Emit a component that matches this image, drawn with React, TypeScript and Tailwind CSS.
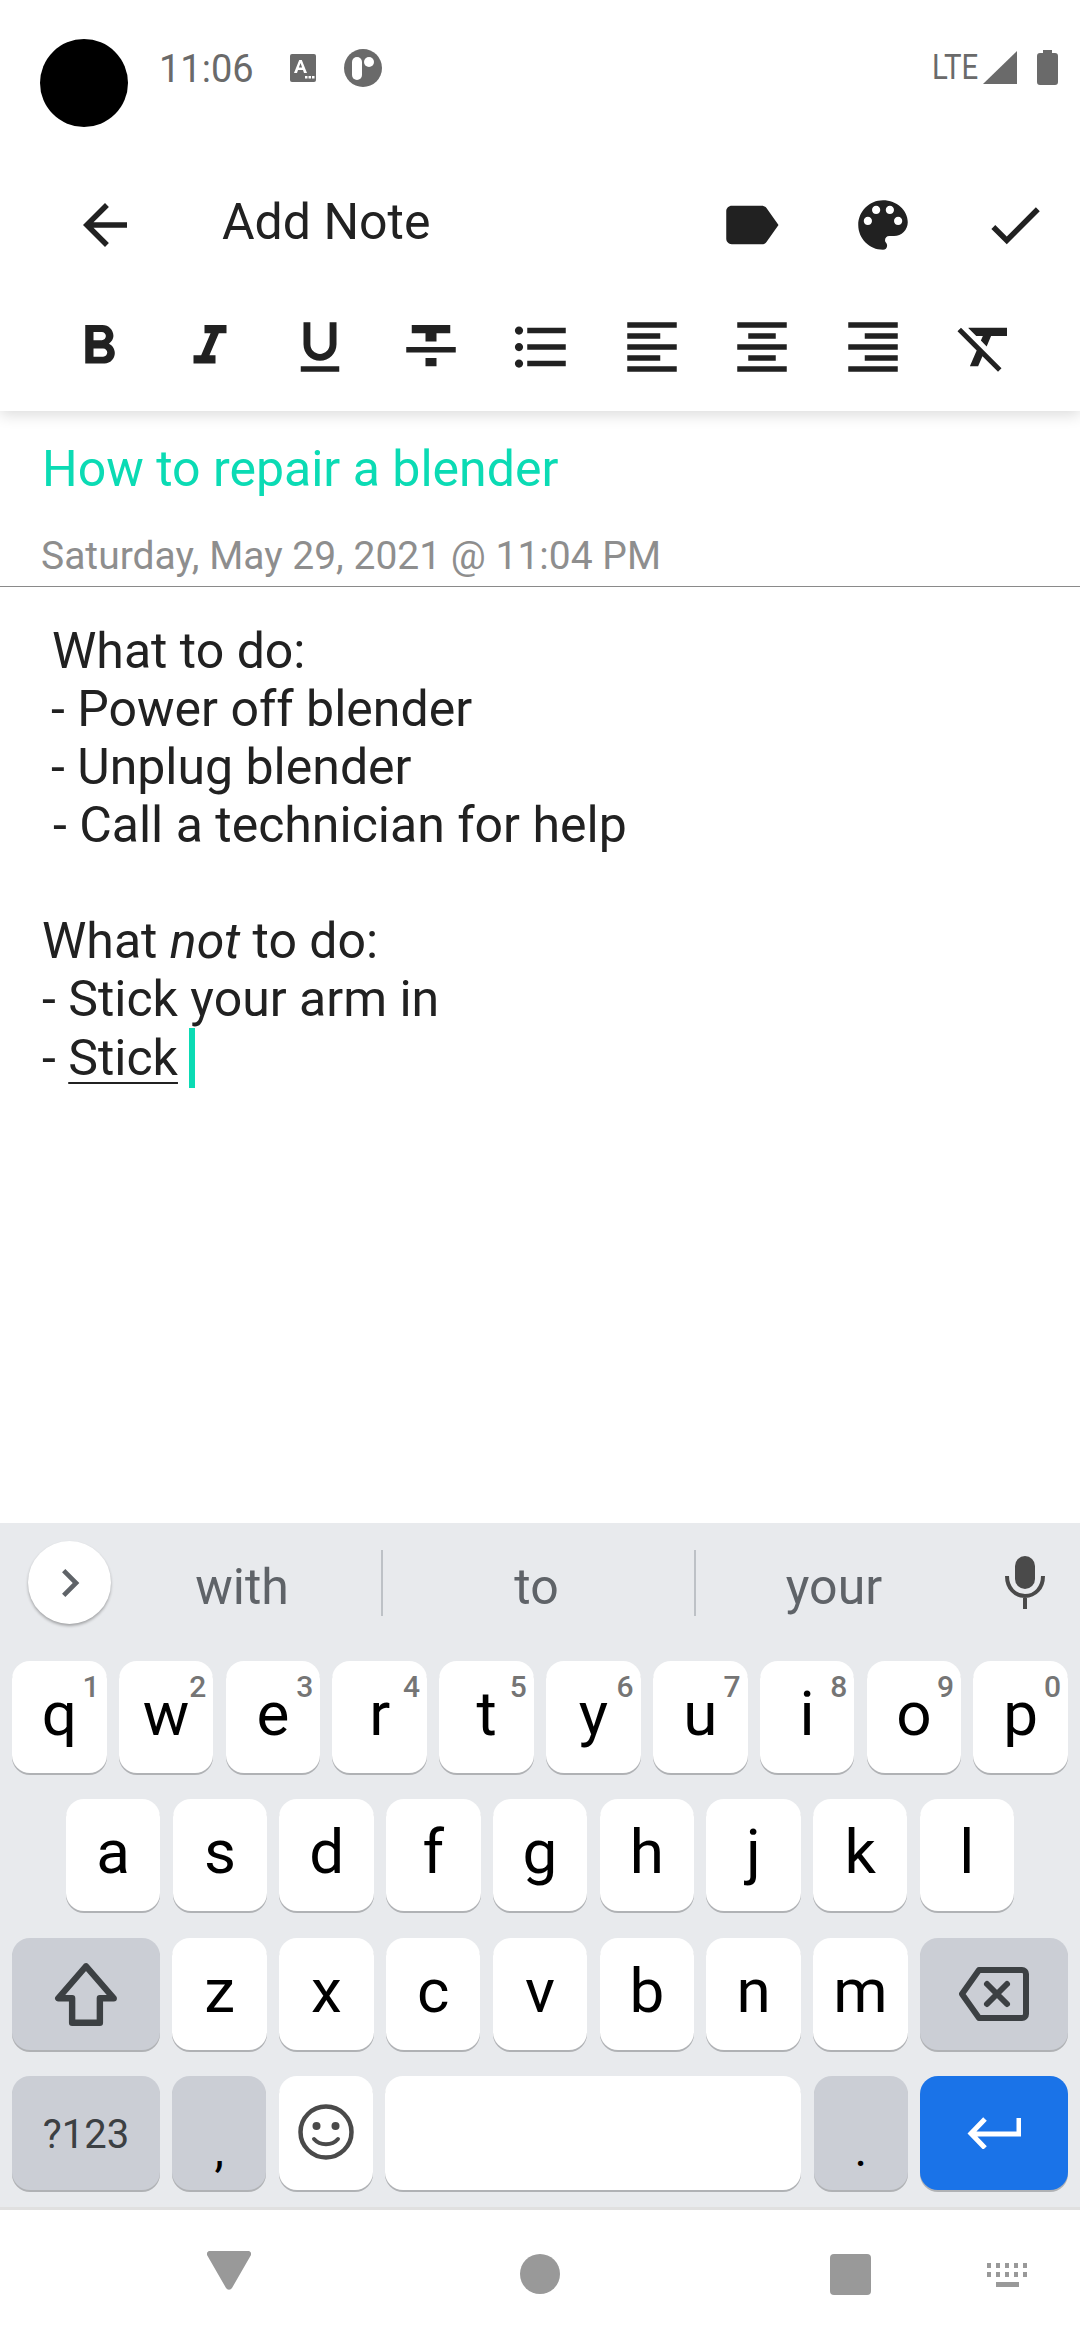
// App.tsx
import React from 'react';

const Icon = ({ d, size = 66, className = '' }: { d: string; size?: number; className?: string }) => (
  <svg viewBox="0 0 24 24" width={size} height={size} className={`shrink-0 ${className}`} fill="currentColor">
    <path d={d} />
  </svg>
);

const formatIcons = [
  'M15.6 10.79c.97-.67 1.65-1.77 1.65-2.79 0-2.26-1.75-4-4-4H7v14h7.04c2.09 0 3.71-1.7 3.71-3.79 0-1.52-.86-2.82-2.15-3.42zM10 6.5h3c.83 0 1.5.67 1.5 1.5s-.67 1.5-1.5 1.5h-3v-3zm3.5 9H10v-3h3.5c.83 0 1.5.67 1.5 1.5s-.67 1.5-1.5 1.5z',
  'M10 4v3h2.21l-3.42 8H6v3h8v-3h-2.21l3.42-8H18V4z',
  'M12 17c3.31 0 6-2.69 6-6V3h-2.5v8c0 1.93-1.57 3.5-3.5 3.5S8.5 12.93 8.5 11V3H6v8c0 3.31 2.69 6 6 6zm-7 2v2h14v-2H5z',
  'M10 19h4v-3h-4v3zM5 4v3h5v3h4V7h5V4H5zM3 14h18v-2H3v2z',
  'M4 10.5c-.83 0-1.5.67-1.5 1.5s.67 1.5 1.5 1.5 1.5-.67 1.5-1.5-.67-1.5-1.5-1.5zm0-6c-.83 0-1.5.67-1.5 1.5S3.17 7.5 4 7.5 5.5 6.83 5.5 6 4.83 4.5 4 4.5zm0 12c-.83 0-1.5.68-1.5 1.5s.68 1.5 1.5 1.5 1.5-.68 1.5-1.5-.67-1.5-1.5-1.5zM7 19h14v-2H7v2zm0-6h14v-2H7v2zm0-8v2h14V5H7z',
  'M15 15H3v2h12v-2zm0-8H3v2h12V7zM3 13h18v-2H3v2zm0 8h18v-2H3v2zM3 3v2h18V3H3z',
  'M7 15v2h10v-2H7zm-4 6h18v-2H3v2zm0-8h18v-2H3v2zm4-6v2h10V7H7zM3 3v2h18V3H3z',
  'M3 21h18v-2H3v2zm6-4h12v-2H9v2zm-6-4h18v-2H3v2zm6-4h12V7H9v2zM3 3v2h18V3H3z',
  'M3.27 5L2 6.27l6.97 6.97L6.5 19h3l1.57-3.66L16.73 21 18 19.73 3.55 5.27 3.27 5zM6 5v.18L8.82 8h2.4l-.72 1.68 2.1 2.1L14.21 8H20V5H6z',
];

const StatusBar = () => (
  <div className="flex h-[127px] items-start pl-[40px] text-[#6a6a6a]">
    <div className="mt-[39px] size-[88px] shrink-0 rounded-full bg-black" />
    <span className="ml-[31px] mt-[47px] text-[38px] leading-[44px]">11:06</span>
    <svg viewBox="0 0 26 28" width={26} height={28} className="ml-[36px] mt-[54px] shrink-0">
      <rect width="26" height="28" rx="2" fill="#6a6a6a" />
      <path d="M4 19L9.2 6h2.6L17 19h-3l-1-3H8l-1 3zM8.9 13.6h3.2L10.5 9z" fill="#fff" />
      <path d="M15 22h2.5v2.5H15zM18.5 22H21v2.5h-2.5zM22 22h2.500v2.500H22z" fill="#fff" />
    </svg>
    <svg viewBox="0 0 38 38" width={38} height={38} className="ml-[28px] mt-[49px] shrink-0">
      <circle cx="19" cy="19" r="19" fill="#6a6a6a" />
      <rect x="8" y="8" width="10" height="23" rx="5" fill="#fff" />
      <circle cx="25" cy="13" r="5" fill="#fff" />
    </svg>
    <span className="ml-auto mt-[48px] w-[44px] origin-left scale-x-[0.84] text-[35px] leading-[40px]">LTE</span>
    <svg viewBox="0 0 34 33" width={34} height={33} className="ml-[7px] mt-[51px] shrink-0">
      <path d="M34 0v33H0z" fill="#6a6a6a" />
    </svg>
    <svg viewBox="0 0 21 35" width={21} height={35} className="ml-[20px] mr-[22px] mt-[50px] shrink-0">
      <path d="M6 0h9v3h3a3 3 0 0 1 3 3v26a3 3 0 0 1-3 3H3a3 3 0 0 1-3-3V6a3 3 0 0 1 3-3h3z" fill="#6a6a6a" />
    </svg>
  </div>
);

const Toolbar = () => (
  <div className="text-[#212121]">
    <div className="flex h-[156px] items-center pl-[72px] pr-[32px] pt-[40px]">
      <Icon d="M20 11H7.830l5.590-5.590L12 4l-8 8 8 8 1.410-1.410L7.830 13H20v-2z" />
      <span className="ml-[84px] -mt-[6px] text-[50px] leading-[56px]">Add Note</span>
      <Icon className="ml-auto" d="M17.630 5.840C17.270 5.330 16.670 5 16 5L5 5.010C3.900 5.010 3 5.900 3 7v10c0 1.100.9 1.990 2 1.990L16 19c.67 0 1.270-.33 1.630-.84L22 12l-4.370-6.160z" />
      <Icon className="ml-[66px]" d="M12 3c-4.970 0-9 4.030-9 9s4.030 9 9 9c.83 0 1.500-.67 1.500-1.500 0-.39-.15-.74-.39-1.010-.23-.26-.38-.61-.38-.99 0-.83.67-1.500 1.500-1.500H16c2.760 0 5-2.240 5-5 0-4.420-4.030-8-9-8zm-5.500 9c-.83 0-1.500-.67-1.500-1.500S5.670 9 6.500 9 8 9.670 8 10.500 7.330 12 6.500 12zm3-4C8.670 8 8 7.330 8 6.500S8.670 5 9.500 5s1.500.67 1.500 1.500S10.330 8 9.500 8zm5 0c-.83 0-1.500-.67-1.500-1.500S13.670 5 14.500 5s1.500.67 1.500 1.500S15.330 8 14.500 8zm3 4c-.83 0-1.500-.67-1.500-1.500S16.670 9 17.500 9s1.500.67 1.500 1.500-.67 1.500-1.500 1.500z" />
      <Icon className="ml-[66px]" d="M9 16.170L4.830 12l-1.420 1.410L9 19 21 7l-1.410-1.410z" />
    </div>
    <div className="flex h-[128px] items-start pl-[44px] pt-[31px]">
      {formatIcons.map((d, i) => (
        <div key={i} className={`flex w-[110.5px] justify-center ${i === 8 ? 'pl-[3px]' : ''}`}>
          <Icon d={d} />
        </div>
      ))}
    </div>
  </div>
);

const NoteBody = () => (
  <div className="h-[1112px] bg-white text-[#212121]">
    <div className="px-[42px] pt-[29px] text-[50px] leading-[58px] text-[#0bdbb4]">How to repair a blender</div>
    <div className="px-[41px] pt-[36px] text-[39px] leading-[44px] text-[#8e8e8e]">Saturday, May 29, 2021 @ 11:04 PM</div>
    <div className="mt-[8px] h-px bg-[#8a8a8a]" />
    <div className="px-[42px] pt-[35px] text-[50px] leading-[58px]">
      <div className="pl-[10px]">What to do:</div>
      <div className="pl-[9px]">- Power off blender</div>
      <div className="pl-[9px]">- Unplug blender</div>
      <div className="pl-[11px]">- Call a technician for help</div>
      <div className="h-[58px]" />
      <div>What <em>not</em> to do:</div>
      <div>- Stick your arm in</div>
      <div className="flex items-center whitespace-pre">
        - <span className="underline decoration-[2px] underline-offset-[7px]">Stick</span>
        <span className="ml-[11px] h-[60px] w-[6px] bg-[#0bdbb4]" />
      </div>
    </div>
  </div>
);

const Key = ({ label, hint }: { label: string; hint?: string }) => (
  <div className="relative flex h-[112px] flex-1 items-start justify-center rounded-[18px] bg-white text-[62px] leading-[70px] text-black shadow-[0_2px_0_#b0b2b5]">
    <span className="pt-[18px]">{label}</span>
    {hint && <span className="absolute right-[7px] top-[9px] text-[30px] font-medium leading-[34px] text-[#757575]">{hint}</span>}
  </div>
);

const Keyboard = () => (
  <div className="h-[687px] border-b-[3px] border-[#e0e0e0] bg-[#e8eaed]">
    <div className="flex h-[138px] items-start">
      <div className="ml-[28px] mt-[18px] flex size-[83px] shrink-0 items-center justify-center rounded-full bg-white text-[#5f6368] shadow-[0_2px_3px_rgba(0,0,0,0.3)]">
        <Icon size={56} d="M10 6L8.590 7.410 13.170 12l-4.580 4.590L10 18l6-6z" />
      </div>
      <div className="mt-[27px] flex h-[66px] w-[272px] items-center justify-center border-r-2 border-[#bdc1c6] text-[50px] text-[#5f6368]">
        <span className="-ml-[8px] pt-[8px]">with</span>
      </div>
      <div className="mt-[27px] flex h-[66px] w-[313px] items-center justify-center border-r-2 border-[#bdc1c6] text-[50px] text-[#5f6368]">
        <span className="-ml-[4px] pt-[8px]">to</span>
      </div>
      <div className="mt-[27px] flex h-[66px] w-[276px] items-center justify-center text-[50px] text-[#5f6368]">
        <span className="pt-[8px]">your</span>
      </div>
      <svg viewBox="0 0 40 53" width={40} height={53} className="ml-[33px] mt-[33px] shrink-0 text-[#4a4a4a]" fill="none" stroke="currentColor" strokeWidth={4}>
        <rect x="10" y="0" width="20" height="33" rx="10" fill="currentColor" stroke="none" />
        <path d="M2 20c0 12 8 20 18 20s18-8 18-20M20 40v13" />
      </svg>
    </div>
    <div className="flex gap-[12.300px] px-[12px]">
      {['q', 'w', 'e', 'r', 't', 'y', 'u', 'i', 'o', 'p'].map((k, i) => (
        <Key key={k} label={k} hint={String((i + 1) % 10)} />
      ))}
    </div>
    <div className="mt-[26px] flex gap-[12.300px] px-[66px]">
      {['a', 's', 'd', 'f', 'g', 'h', 'j', 'k', 'l'].map((k) => (
        <Key key={k} label={k} />
      ))}
    </div>
    <div className="mt-[27px] flex gap-[12.300px] px-[12px]">
      <div className="flex h-[112px] w-[148px] items-center justify-center rounded-[18px] bg-[#cbced5] text-[#3c4043] shadow-[0_2px_0_#b0b2b5]">
        <svg viewBox="0 0 60 60" width={64} height={64} fill="none" stroke="currentColor" strokeWidth={6} strokeLinejoin="round">
          <path d="M30 4L4 34h13v23h26V34h13z" />
        </svg>
      </div>
      {['z', 'x', 'c', 'v', 'b', 'n', 'm'].map((k) => (
        <Key key={k} label={k} />
      ))}
      <div className="flex h-[112px] w-[148px] items-center justify-center rounded-[18px] bg-[#cbced5] text-[#3c4043] shadow-[0_2px_0_#b0b2b5]">
        <svg viewBox="0 0 70 54" width={70} height={54} fill="none" stroke="currentColor" strokeWidth={6} strokeLinejoin="round" strokeLinecap="round">
          <path d="M20 3h43a4 4 0 0 1 4 4v40a4 4 0 0 1-4 4H20L3 27z" />
          <path d="M28 17l20 20M48 17L28 37" />
        </svg>
      </div>
    </div>
    <div className="mt-[26px] flex gap-[12.300px] px-[12px]">
      <div className="flex h-[114px] w-[148px] items-center justify-center rounded-[18px] bg-[#cbced5] pt-[4px] text-[40px] text-[#3c4043] shadow-[0_2px_0_#b0b2b5]">?123</div>
      <div className="flex h-[114px] w-[94px] justify-center rounded-[18px] bg-[#cbced5] pt-[46px] text-[48px] leading-[56px] text-black shadow-[0_2px_0_#b0b2b5]">,</div>
      <div className="flex h-[114px] w-[94px] items-center justify-center rounded-[18px] bg-white pb-[2px] text-[#4a4a4a] shadow-[0_2px_0_#b0b2b5]">
        <svg viewBox="0 0 56 56" width={56} height={56}>
          <circle cx="28" cy="28" r="25.500" fill="none" stroke="currentColor" strokeWidth={4.500} />
          <circle cx="18.500" cy="22" r="4" fill="currentColor" />
          <circle cx="37.500" cy="22" r="4" fill="currentColor" />
          <path d="M16 35c6 7 18 7 24 0" fill="none" stroke="currentColor" strokeWidth={4} strokeLinecap="round" />
        </svg>
      </div>
      <div className="h-[114px] flex-1 rounded-[18px] bg-white shadow-[0_2px_0_#b0b2b5]" />
      <div className="flex h-[114px] w-[94px] justify-center rounded-[18px] bg-[#cbced5] pt-[46px] text-[48px] leading-[56px] text-black shadow-[0_2px_0_#b0b2b5]">.</div>
      <div className="flex h-[114px] w-[148px] items-center justify-center rounded-[18px] bg-[#1a73e8] text-white shadow-[0_2px_0_#b0b2b5]">
        <svg viewBox="0 0 54 32" width={54} height={32} fill="none" stroke="currentColor" strokeWidth={5}>
          <path d="M52 1v16H5M18 2L4 16.500 18 31" />
        </svg>
      </div>
    </div>
  </div>
);

const NavBar = () => (
  <div className="flex h-[130px] items-start bg-white text-[#999999]">
    <svg viewBox="0 0 44 40" width={44} height={40} className="ml-[207px] mt-[41px] shrink-0" fill="currentColor">
      <path d="M3 0h38a3 3 0 0 1 3 4L25 37a3.500 3.500 0 0 1-6 0L0 4a3 3 0 0 1 3-4z" />
    </svg>
    <div className="ml-[269px] mt-[44px] size-[40px] shrink-0 rounded-full bg-[#999999]" />
    <div className="ml-[270px] mt-[44px] size-[41px] shrink-0 rounded-[4px] bg-[#999999]" />
    <svg viewBox="0 0 42 24" width={42} height={24} className="ml-[116px] mt-[53px] shrink-0" fill="currentColor">
      <path d="M0 0h4v5H0zM9 0h4v5H9zM18 0h4v5h-4zM27 0h4v5h-4zM36 0h4v5h-4zM0 9h4v5H0zM9 9h4v5H9zM18 9h4v5h-4zM27 9h4v5h-4zM36 9h4v5h-4zM9 19h23v5H9z" />
    </svg>
  </div>
);

const App: React.FC = () => (
  <div className="flex h-[2340px] w-[1080px] flex-col overflow-hidden bg-white font-['Roboto',sans-serif]">
    <div className="relative z-10 h-[411px] bg-white shadow-[0_4px_14px_rgba(0,0,0,0.14)]">
      <StatusBar />
      <Toolbar />
    </div>
    <NoteBody />
    <Keyboard />
    <NavBar />
  </div>
);

export default App;
